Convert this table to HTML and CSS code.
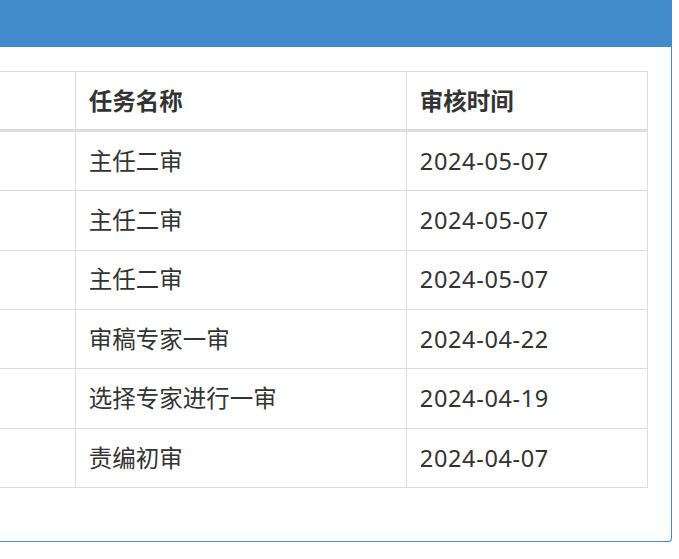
FILE: index.html
```html
<!DOCTYPE html>
<html lang="zh-CN">
<head>
<meta charset="utf-8">
<title>审核记录</title>
<link rel="stylesheet" href="styles.css">
</head>
<body>
<div class="panel">
  <div class="panel-heading"></div>
  <div class="panel-body">
    <table class="table">
      <colgroup>
        <col class="col-a">
        <col class="col-b">
        <col class="col-c">
      </colgroup>
      <thead>
        <tr><th></th><th>任务名称</th><th>审核时间</th></tr>
      </thead>
      <tbody>
        <tr><td></td><td>主任二审</td><td class="date">2024-05-07</td></tr>
        <tr><td></td><td>主任二审</td><td class="date">2024-05-07</td></tr>
        <tr><td></td><td>主任二审</td><td class="date">2024-05-07</td></tr>
        <tr><td></td><td>审稿专家一审</td><td class="date">2024-04-22</td></tr>
        <tr><td></td><td>选择专家进行一审</td><td class="date">2024-04-19</td></tr>
        <tr><td></td><td>责编初审</td><td class="date">2024-04-07</td></tr>
      </tbody>
    </table>
  </div>
</div>
</body>
</html>
```

FILE: styles.css
```css
html, body {
  margin: 0;
  padding: 0;
  background: #fff;
}
body {
  font-family: "Noto Sans", "Noto Sans CJK SC", sans-serif;
  color: #333;
  overflow: hidden;
}
.panel {
  margin: 0 7px 0 -400px;
  border: 1px solid #428bca;
  border-top: 0;
  border-radius: 0 0 4px 4px;
  background: #fff;
}
.panel-heading {
  height: 47px;
  background: #428bca;
}
.panel-body {
  padding: 24px 23px 24px 24px;
}
.table {
  width: 100%;
  border-collapse: collapse;
  table-layout: fixed;
  margin-bottom: 29px;
  font-size: 23.5px;
}
.col-b { width: 331px; }
.col-c { width: 241px; }
.table th,
.table td {
  border: 1px solid #ddd;
  padding: 12.8px 12.8px;
  height: 32.8px;
  line-height: 32.8px;
  text-align: left;
  white-space: nowrap;
  font-family: "Noto Sans", "Noto Sans CJK SC", sans-serif;
}
.table th {
  font-weight: bold;
  border-bottom: 3px solid #ddd;
  padding-top: 12.5px;
  padding-bottom: 11.5px;
}
.table td {
  font-weight: 400;
}
.table td.date {
  letter-spacing: 0.65px;
}
```
